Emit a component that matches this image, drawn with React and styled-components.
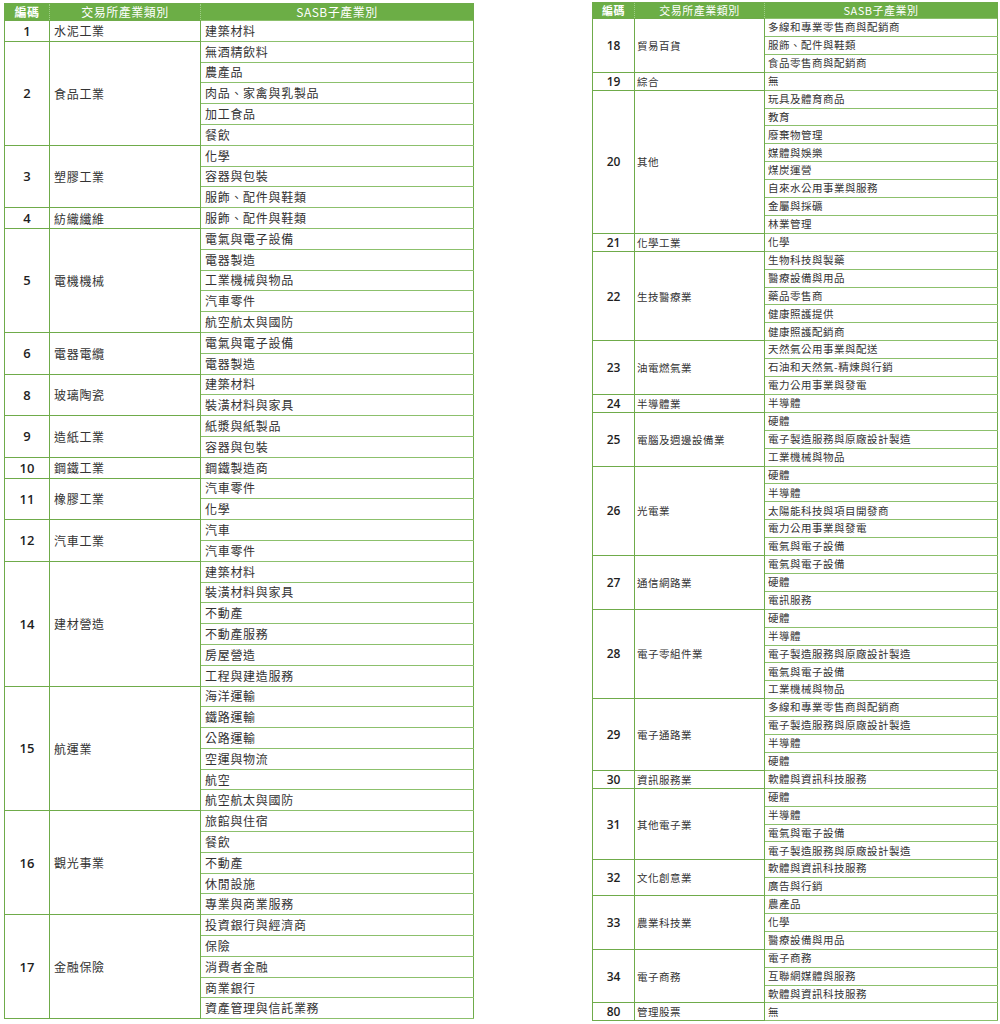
import React from "react";
import styled, { createGlobalStyle } from "styled-components";

const GlobalStyle = createGlobalStyle`
  html, body {
    margin: 0;
    padding: 0;
    background: #ffffff;
  }
  body {
    font-family: "Noto Sans CJK TC", "Noto Sans", sans-serif;
    color: #2b2b2b;
  }
`;

const leftData = [
  ["1", "水泥工業", ["建築材料"]],
  ["2", "食品工業", ["無酒精飲料", "農產品", "肉品、家禽與乳製品", "加工食品", "餐飲"]],
  ["3", "塑膠工業", ["化學", "容器與包裝", "服飾、配件與鞋類"]],
  ["4", "紡織纖維", ["服飾、配件與鞋類"]],
  ["5", "電機機械", ["電氣與電子設備", "電器製造", "工業機械與物品", "汽車零件", "航空航太與國防"]],
  ["6", "電器電纜", ["電氣與電子設備", "電器製造"]],
  ["8", "玻璃陶瓷", ["建築材料", "裝潢材料與家具"]],
  ["9", "造紙工業", ["紙漿與紙製品", "容器與包裝"]],
  ["10", "鋼鐵工業", ["鋼鐵製造商"]],
  ["11", "橡膠工業", ["汽車零件", "化學"]],
  ["12", "汽車工業", ["汽車", "汽車零件"]],
  ["14", "建材營造", ["建築材料", "裝潢材料與家具", "不動產", "不動產服務", "房屋營造", "工程與建造服務"]],
  ["15", "航運業", ["海洋運輸", "鐵路運輸", "公路運輸", "空運與物流", "航空", "航空航太與國防"]],
  ["16", "觀光事業", ["旅館與住宿", "餐飲", "不動產", "休閒設施", "專業與商業服務"]],
  ["17", "金融保險", ["投資銀行與經濟商", "保險", "消費者金融", "商業銀行", "資產管理與信託業務"]],
];

const rightData = [
  ["18", "貿易百貨", ["多線和專業零售商與配銷商", "服飾、配件與鞋類", "食品零售商與配銷商"]],
  ["19", "綜合", ["無"]],
  ["20", "其他", ["玩具及體育商品", "教育", "廢棄物管理", "媒體與娛樂", "煤炭運營", "自來水公用事業與服務", "金屬與採礦", "林業管理"]],
  ["21", "化學工業", ["化學"]],
  ["22", "生技醫療業", ["生物科技與製藥", "醫療設備與用品", "藥品零售商", "健康照護提供", "健康照護配銷商"]],
  ["23", "油電燃氣業", ["天然氣公用事業與配送", "石油和天然氣-精煉與行銷", "電力公用事業與發電"]],
  ["24", "半導體業", ["半導體"]],
  ["25", "電腦及週邊設備業", ["硬體", "電子製造服務與原廠設計製造", "工業機械與物品"]],
  ["26", "光電業", ["硬體", "半導體", "太陽能科技與項目開發商", "電力公用事業與發電", "電氣與電子設備"]],
  ["27", "通信網路業", ["電氣與電子設備", "硬體", "電訊服務"]],
  ["28", "電子零組件業", ["硬體", "半導體", "電子製造服務與原廠設計製造", "電氣與電子設備", "工業機械與物品"]],
  ["29", "電子通路業", ["多線和專業零售商與配銷商", "電子製造服務與原廠設計製造", "半導體", "硬體"]],
  ["30", "資訊服務業", ["軟體與資訊科技服務"]],
  ["31", "其他電子業", ["硬體", "半導體", "電氣與電子設備", "電子製造服務與原廠設計製造"]],
  ["32", "文化創意業", ["軟體與資訊科技服務", "廣告與行銷"]],
  ["33", "農業科技業", ["農產品", "化學", "醫療設備與用品"]],
  ["34", "電子商務", ["電子商務", "互聯網媒體與服務", "軟體與資訊科技服務"]],
  ["80", "管理股票", ["無"]],
];

const Page = styled.div`
  display: flex;
  justify-content: space-between;
  align-items: flex-start;
  padding: 2px 2px 0 4px;
  width: 1000px;
  box-sizing: border-box;
`;

const Table = styled.table`
  border-collapse: collapse;
  table-layout: fixed;
  width: ${(p) => p.$width}px;
  margin-top: ${(p) => p.$top}px;
  font-size: ${(p) => p.$font}px;
  letter-spacing: ${(p) => p.$spacing}px;
  border: 1px solid #6fab4a;
`;

const HeadRow = styled.tr`
  height: ${(p) => p.$h}px;
  background: #6cae46;
`;

const HeadCell = styled.th`
  color: #ffffff;
  font-weight: ${(p) => (p.$bold ? 700 : 400)};
  font-size: ${(p) => p.$font}px;
  letter-spacing: 0.5px;
  padding: 0;
  line-height: 1;
  border-left: 1px dotted #9fce86;
  border-right: 1px dotted #9fce86;
  text-align: center;
`;

const Row = styled.tr`
  height: ${(p) => p.$h}px;
`;

const CodeCell = styled.td`
  font-family: "Open Sans", "Noto Sans CJK TC", sans-serif;
  font-weight: 600;
  font-size: ${(p) => p.$font}px;
  letter-spacing: 0;
  text-align: center;
  color: #1f1f1f;
  padding: 0;
  border: 1px solid #6fab4a;
`;

const CatCell = styled.td`
  padding: 0 0 0 ${(p) => p.$pad}px;
  border: 1px solid #6fab4a;
  color: #333333;
  white-space: nowrap;
`;

const SubCell = styled.td`
  padding: 0 0 0 ${(p) => p.$pad}px;
  border-left: 1px solid #6fab4a;
  border-right: 1px solid #6fab4a;
  border-bottom: 1px solid #8cc06c;
  border-top: 1px solid #8cc06c;
  color: #333333;
  white-space: nowrap;
  line-height: 1;
`;

function IndustryTable({ data, cfg }) {
  return (
    <Table $width={cfg.width} $top={cfg.top} $font={cfg.font} $spacing={cfg.spacing}>
      <colgroup>
        {cfg.cols.map((w, i) => (
          <col key={i} style={{ width: w }} />
        ))}
      </colgroup>
      <thead>
        <HeadRow $h={cfg.headH}>
          <HeadCell $bold $font={cfg.headFont}>編碼</HeadCell>
          <HeadCell $font={cfg.headFont}>交易所產業類別</HeadCell>
          <HeadCell $font={cfg.headFont}>SASB子產業別</HeadCell>
        </HeadRow>
      </thead>
      <tbody>
        {data.map(([code, cat, subs]) =>
          subs.map((s, i) => (
            <Row key={code + "-" + i} $h={cfg.rowH}>
              {i === 0 && (
                <>
                  <CodeCell rowSpan={subs.length} $font={cfg.codeFont}>
                    {code}
                  </CodeCell>
                  <CatCell rowSpan={subs.length} $pad={cfg.catPad}>
                    {cat}
                  </CatCell>
                </>
              )}
              <SubCell $pad={cfg.subPad}>{s}</SubCell>
            </Row>
          ))
        )}
      </tbody>
    </Table>
  );
}

const leftCfg = {
  width: 469,
  top: 1,
  font: 12,
  spacing: 0.7,
  headFont: 12,
  codeFont: 13,
  headH: 17,
  rowH: 20.8,
  cols: [45, 151, 273],
  catPad: 4,
  subPad: 4,
};

const rightCfg = {
  width: 405,
  top: 0,
  font: 10.5,
  spacing: 0.5,
  headFont: 11,
  codeFont: 12,
  headH: 16,
  rowH: 17.9,
  cols: [42, 130, 233],
  catPad: 2,
  subPad: 3,
};

export default function App() {
  return (
    <>
      <GlobalStyle />
      <Page>
        <IndustryTable data={leftData} cfg={leftCfg} />
        <IndustryTable data={rightData} cfg={rightCfg} />
      </Page>
    </>
  );
}
